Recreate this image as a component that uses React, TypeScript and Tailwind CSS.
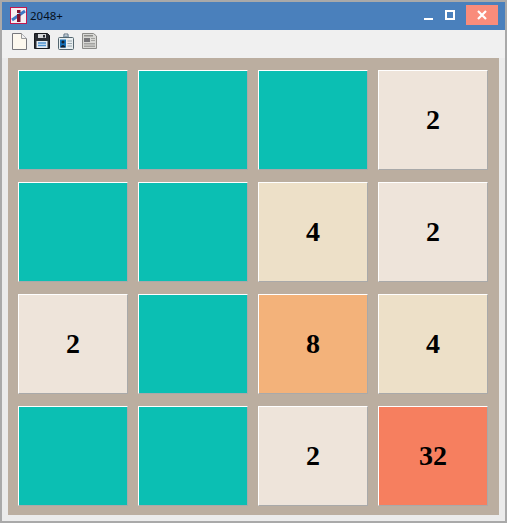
const board = [
  [0, 0, 0, 2],
  [0, 0, 4, 2],
  [2, 0, 8, 4],
  [0, 0, 2, 32],
];

// tile colours keyed by value
const tileClass = (value: number) => {
  if (value === 2) return "bg-[#eee4da]";
  if (value === 4) return "bg-[#ede0c8]";
  if (value === 8) return "bg-[#f3b27a]";
  if (value === 32) return "bg-[#f67f5f]";
  return "bg-[#0bbfb3]";
};

const AppIcon = () => (
  <svg width="17" height="17" viewBox="0 0 17 17" className="shrink-0">
    <rect x="0.5" y="0.5" width="16" height="16" fill="#f6eef2" stroke="#c2184f" />
    <path d="M2 13 L15 4" stroke="#3f77c4" strokeWidth="3" />
    <rect x="7" y="7" width="3.5" height="8" fill="#7c1230" />
    <rect x="7" y="3" width="3.5" height="3" fill="#7c1230" />
  </svg>
);

const NewIcon = () => (
  <svg width="15" height="17" viewBox="0 0 15 17">
    <path d="M0.5 0.5 H9.5 L14.5 5.5 V16.5 H0.5 Z" fill="#fdf8ee" stroke="#77777c" />
    <path d="M9.5 0.5 V5.5 H14.5" fill="#f0f0f0" stroke="#9a9a9a" />
  </svg>
);

const SaveIcon = () => (
  <svg width="16" height="16" viewBox="0 0 16 16">
    <path d="M0.5 0.5 H13.5 L15.5 2.5 V15.5 H0.5 Z" fill="#2a2d33" stroke="#17191d" />
    <rect x="4" y="1" width="8" height="4" fill="#d4d6d8" />
    <rect x="9" y="2" width="2" height="2.5" fill="#2a2d33" />
    <rect x="2.5" y="8" width="11" height="7" fill="#e4ecf4" />
    <path d="M4 10 H12 M4 12.5 H12" stroke="#4f93cf" strokeWidth="1.4" />
  </svg>
);

const BadgeIcon = () => (
  <svg width="16" height="17" viewBox="0 0 16 17">
    <path d="M6 3 V1 H10 V3" fill="none" stroke="#5b6f80" />
    <rect x="5" y="2.5" width="6" height="2" fill="#8aa0b0" />
    <rect x="0.5" y="4.5" width="15" height="12" rx="1" fill="#e8eef0" stroke="#54666f" />
    <rect x="2" y="6.5" width="6" height="8" fill="#1670b8" />
    <circle cx="5" cy="9" r="1.5" fill="#16202c" />
    <path d="M2.5 14.5 C3 11 7 11 7.5 14.5 Z" fill="#16202c" />
    <path d="M9.5 8 H14 M9.5 10.5 H14 M9.5 13 H14" stroke="#9aa7ae" />
  </svg>
);

const NewsIcon = () => (
  <svg width="15" height="16" viewBox="0 0 15 16">
    <path d="M0.5 0.5 H11.5 L14.5 3 V15.5 H0.5 Z" fill="#d8d8d5" stroke="#8b8b88" />
    <rect x="2" y="2" width="9" height="1.5" fill="#8d8d8a" />
    <rect x="2" y="5" width="6" height="4" fill="#77777a" />
    <path d="M9 5.5 H13 M9 7.5 H13 M2 10.5 H13 M2 12 H13 M2 13.5 H13" stroke="#a3a3a0" />
  </svg>
);

const Tile = ({ value }: { value: number }) => (
  <div
    className={`flex h-[100px] w-[110px] items-center justify-center border-t border-l border-r border-b border-t-white border-l-white border-r-[#a9a9a9] border-b-[#a9a9a9] font-['Liberation_Serif',serif] text-[28px] leading-none font-bold text-black ${tileClass(value)}`}
  >
    {value > 0 ? value : ""}
  </div>
);

export default function App() {
  return (
    <div className="flex h-[523px] w-[507px] flex-col border-2 border-[#a9a9a9] bg-[#ebebeb]">
      {/* title bar */}
      <div className="flex h-[28px] items-start bg-[#4a80bc] pl-[8px] pr-[7px]">
        <div className="mt-[5px] flex items-center">
          <AppIcon />
          <span className="ml-[3px] font-['Noto_Sans',sans-serif] text-[11.5px] leading-[17px] text-[#06101c]">2048+</span>
        </div>
        <div className="ml-auto flex items-start">
          <div className="mt-[16px] h-[2px] w-[9px] bg-white" />
          <div className="mt-[8px] ml-[12px] h-[10px] w-[10px] border-2 border-white" />
          <div className="mt-[3px] ml-[11px] flex h-[20px] w-[32px] items-center justify-center bg-[#f98c7b]">
            <svg width="10" height="10" viewBox="0 0 10 10">
              <path d="M1 1 L9 9 M9 1 L1 9" stroke="white" strokeWidth="2.2" />
            </svg>
          </div>
        </div>
      </div>

      {/* toolbar */}
      <div className="flex h-[28px] items-start bg-[#f0f0f0] pt-[3px] pl-[10px]">
        <NewIcon />
        <div className="ml-[7px]"><SaveIcon /></div>
        <div className="ml-[8px]"><BadgeIcon /></div>
        <div className="ml-[8px]"><NewsIcon /></div>
      </div>

      {/* board */}
      <div className="mx-[6px] mb-[6px] grid grid-cols-[repeat(4,110px)] gap-x-[10px] gap-y-[12px] bg-[#bbaea0] pt-[12px] pr-[11px] pb-[9px] pl-[10px]">
        {board.flat().map((value, i) => (
          <Tile key={i} value={value} />
        ))}
      </div>
    </div>
  );
}
